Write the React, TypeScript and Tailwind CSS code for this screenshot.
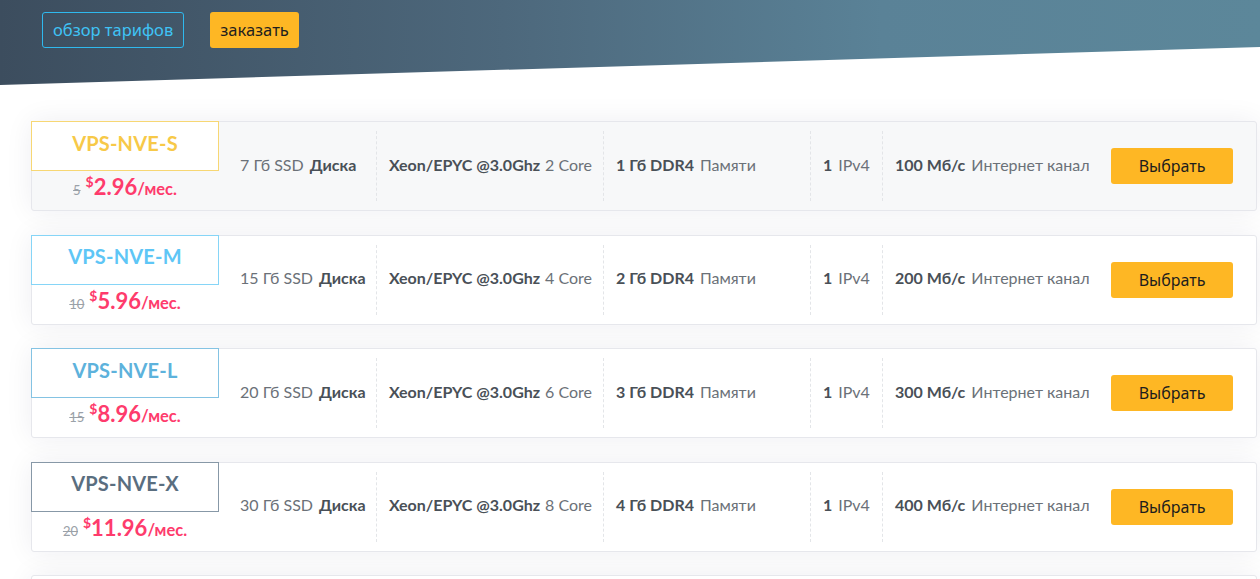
import React from "react";

type Plan = {
  name: string;
  old: string;
  price: string;
  disk: string;
  cores: string;
  ram: string;
  speed: string;
  border: string;
  text: string;
  bg: string;
};

const plans: Plan[] = [
  { name: "VPS-NVE-S", old: "5", price: "2.96", disk: "7", cores: "2", ram: "1", speed: "100", border: "border-[#f7d774]", text: "text-[#f7c948]", bg: "bg-[#f7f8f9]" },
  { name: "VPS-NVE-M", old: "10", price: "5.96", disk: "15", cores: "4", ram: "2", speed: "200", border: "border-[#86d5f7]", text: "text-[#5ec6f6]", bg: "bg-white" },
  { name: "VPS-NVE-L", old: "15", price: "8.96", disk: "20", cores: "6", ram: "3", speed: "300", border: "border-[#84c3e3]", text: "text-[#5db2dc]", bg: "bg-white" },
  { name: "VPS-NVE-X", old: "20", price: "11.96", disk: "30", cores: "8", ram: "4", speed: "400", border: "border-[#8798a7]", text: "text-[#5a6e7f]", bg: "bg-white" },
];

function Divider() {
  return <div className="self-stretch my-[9px] border-l border-dashed border-[#e3e5e8]" />;
}

function Card({ p }: { p: Plan }) {
  return (
    <div className={`flex h-[90px] w-[1226px] shrink-0 items-stretch rounded-[3px] border border-[#e6e7ec] ${p.bg} shadow-[0_0_28px_rgba(30,30,70,0.07)]`}>
      <div className="flex w-[188px] shrink-0 flex-col -ml-px -mt-px">
        <div className={`flex h-[50px] items-center justify-center border bg-white pb-[7px] ${p.border}`}>
          <span className={`text-[20px] font-bold tracking-[0.2px] ${p.text}`}>{p.name}</span>
        </div>
        <div className="flex items-baseline justify-center pt-[5px] leading-none text-[#fe3b6c]">
          <span className="mr-[5px] text-[13px] text-[#9aa1a8] line-through">{p.old}</span>
          <span className="relative -top-[8px] text-[14px] font-bold">$</span>
          <span className="text-[22px] font-bold">{p.price}</span>
          <span className="text-[16.5px] font-bold">/мес.</span>
        </div>
      </div>
      <div className="flex w-[157px] shrink-0 items-center pb-[3px] pl-[21px] text-[16px]">
        <span className="text-[#6b7178]">{p.disk} Гб SSD</span>
        <span className="ml-[6px] font-bold text-[#495057]">Диска</span>
      </div>
      <Divider />
      <div className="flex w-[226px] shrink-0 items-center pb-[3px] pl-[12px] text-[16px]">
        <span className="font-bold text-[#495057]">Xeon/EPYC @3.0Ghz</span>
        <span className="ml-[5px] text-[#6b7178]">{p.cores} Core</span>
      </div>
      <Divider />
      <div className="flex w-[206px] shrink-0 items-center pb-[3px] pl-[12px] text-[16px]">
        <span className="font-bold text-[#495057]">{p.ram} Гб DDR4</span>
        <span className="ml-[6px] text-[#6b7178]">Памяти</span>
      </div>
      <Divider />
      <div className="flex w-[71px] shrink-0 items-center pb-[3px] pl-[12px] text-[16px]">
        <span className="font-bold text-[#495057]">1</span>
        <span className="ml-[6px] text-[#6b7178]">IPv4</span>
      </div>
      <Divider />
      <div className="flex flex-1 items-center pb-[3px] pl-[12px] text-[16px]">
        <span className="font-bold text-[#495057]">{p.speed} Мб/с</span>
        <span className="ml-[6px] text-[#6b7178]">Интернет канал</span>
      </div>
      <div className="flex items-center pr-[23px]">
        <button className="h-[36px] w-[122px] rounded-[3px] bg-[#feb724] text-[16px] text-[#1d1d1d] [font-family:'Noto_Sans',sans-serif]">
          Выбрать
        </button>
      </div>
    </div>
  );
}

export default function App() {
  return (
    <div className="relative min-h-[579px] w-[1260px] overflow-hidden bg-white [font-family:Lato,'Noto_Sans',sans-serif]">
      <div className="h-[85px] w-full bg-[linear-gradient(to_right,#3c4d5e_0%,#4d687c_40%,#5a8297_70%,#5c879a_100%)] [clip-path:polygon(0_0,100%_0,100%_47px,0_85px)]">
        <div className="flex gap-[26px] pl-[42px] pt-[12px] [font-family:'Noto_Sans','Open_Sans',sans-serif]">
          <button className="h-[36px] rounded-[3px] border border-[#2fb9ee] px-[10px] text-[16.5px] text-[#3fc3f5]">
            обзор тарифов
          </button>
          <button className="h-[36px] rounded-[3px] bg-[#feb724] px-[10px] text-[16.5px] text-[#1e1e1e]">
            заказать
          </button>
        </div>
      </div>
      <div className="ml-[31px] mt-[36px] flex flex-col gap-[23.5px]">
        {plans.map((p) => (
          <Card key={p.name} p={p} />
        ))}
        <div className="h-[90px] w-[1226px] shrink-0 rounded-[3px] border border-[#e6e7ec] bg-white shadow-[0_0_28px_rgba(30,30,70,0.07)]" />
      </div>
    </div>
  );
}
